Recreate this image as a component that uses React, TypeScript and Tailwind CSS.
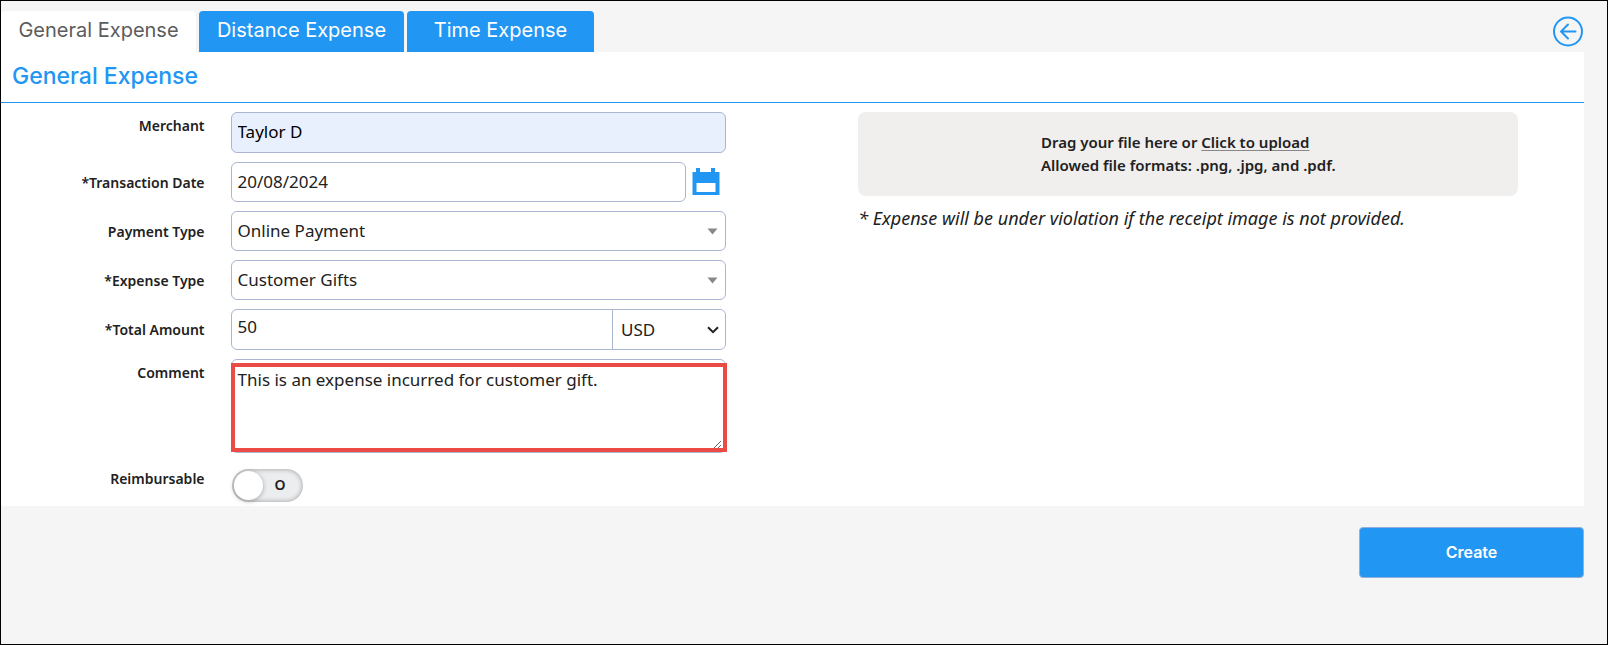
import { useState, type ReactNode } from "react";

const fieldClass =
  "block h-10 w-full rounded-md border border-[#a9b5d1] bg-white px-1.5 text-[17px] leading-6 text-[#212121] outline-none";

const labelPadding = {
  none: "pt-0",
  top: "pt-1",
  middle: "pt-[11px]",
};

function Row({
  id,
  label,
  children,
  align = "middle",
}: {
  id: string;
  label: string;
  children: ReactNode;
  align?: keyof typeof labelPadding;
}) {
  return (
    <div className="grid grid-cols-[29%_62.6%] items-start">
      <label
        htmlFor={id}
        className={labelPadding[align] + " pr-[26px] text-right text-sm leading-5 font-semibold text-[#212121]"}
      >
        {label}
      </label>
      <div className="min-w-0">{children}</div>
    </div>
  );
}

function Dropdown({ id, options }: { id: string; options: string[] }) {
  return (
    <div className="relative">
      <select id={id} className={fieldClass + " appearance-none"}>
        {options.map((o) => (
          <option key={o}>{o}</option>
        ))}
      </select>
      <svg className="pointer-events-none absolute top-[17px] right-2 h-[7px] w-[11px]" viewBox="0 0 11 7" aria-hidden="true">
        <path d="M0.5 0.5h10L5.5 6.5z" fill="#888" />
      </svg>
    </div>
  );
}

export default function App() {
  const [tab, setTab] = useState(0);
  const [merchant, setMerchant] = useState("Taylor D");
  const [date, setDate] = useState("20/08/2024");
  const [amount, setAmount] = useState("50");
  const [comment, setComment] = useState("This is an expense incurred for customer gift.");
  const [reimbursable, setReimbursable] = useState(false);

  return (
    <div className="min-h-screen border border-black bg-[#f5f5f5] pr-[23px] pb-8 font-['Noto_Sans',sans-serif] text-[#212121]">
      <header className="flex items-start justify-between pt-2.5">
        <nav className="flex gap-[3px] font-['Inter',sans-serif] text-xl">
          {["General Expense", "Distance Expense", "Time Expense"].map((name, i) => (
            <button
              key={name}
              type="button"
              onClick={() => setTab(i)}
              className={
                (i === tab ? "bg-white text-[#5c5c5c] " : "bg-[#2196f3] text-white ") +
                (i === 0 ? "w-[195px] " : i === 1 ? "w-[205px] " : "w-[187px] ") +
                "h-[41px] rounded-t pb-1 font-normal whitespace-nowrap"
              }
            >
              {name}
            </button>
          ))}
        </nav>
        <button type="button" aria-label="Back" className="mt-[5px]">
          <svg className="size-8" viewBox="0 0 32 32" fill="none" stroke="#2196f3" strokeWidth="2" strokeLinecap="round" strokeLinejoin="round">
            <circle cx="16" cy="15.5" r="14" />
            <path d="M23.5 15.5H9M16 8.5l-7 7 7 7" />
          </svg>
        </button>
      </header>

      <main className="bg-white pb-1">
        <h1 className="h-[51px] border-b border-[#2196f3] pt-2 pl-[11px] font-['Inter',sans-serif] text-[23px] leading-8 font-medium text-[#2196f3]">
          General Expense
        </h1>
        <form className="grid grid-cols-2 pt-[9px]">
          <div className="flex flex-col gap-[9px]">
            <Row id="merchant" label="Merchant" align="top">
              <input
                id="merchant"
                value={merchant}
                onChange={(e) => setMerchant(e.target.value)}
                className="block h-[41px] w-full rounded-md border border-[#a9b5d1] bg-[#e8effd] px-1.5 pb-0.5 text-[17px] text-black outline-none"
              />
            </Row>
            <Row id="date" label="*Transaction Date">
              <div className="flex items-center gap-1.5">
                <input id="date" value={date} onChange={(e) => setDate(e.target.value)} className={fieldClass + " pb-0.5"} />
                <button type="button" aria-label="Open calendar" className="mr-1.5 shrink-0">
                  <svg className="h-7 w-7" viewBox="0 0 28 28" fill="#2196f3">
                    <path d="M4 0h4v4h11V0h4v4h4.500v23H.5V4H4zM4.500 15v9h19v-9z" fillRule="evenodd" />
                  </svg>
                </button>
              </div>
            </Row>
            <Row id="payment" label="Payment Type">
              <Dropdown id="payment" options={["Online Payment", "Cash"]} />
            </Row>
            <Row id="expense" label="*Expense Type">
              <Dropdown id="expense" options={["Customer Gifts", "Meals"]} />
            </Row>
            <Row id="amount" label="*Total Amount">
              <div className="flex h-[41px] rounded-md border border-[#a9b5d1] bg-white text-[17px]">
                <input
                  id="amount"
                  value={amount}
                  onChange={(e) => setAmount(e.target.value)}
                  className="min-w-0 flex-1 rounded-l-md px-1.5 pb-1.5 outline-none"
                />
                <div className="relative w-[113px] border-l border-[#a9b5d1]">
                  <select aria-label="Currency" className="h-full w-full appearance-none rounded-r-md bg-white pl-2 outline-none">
                    <option>USD</option>
                    <option>EUR</option>
                  </select>
                  <svg className="pointer-events-none absolute top-4 right-1.5 h-2 w-3" viewBox="0 0 12 8" fill="none" stroke="#212121" strokeWidth="2">
                    <path d="M1 1.200l5 5 5-5" />
                  </svg>
                </div>
              </div>
            </Row>
            <Row id="comment" label="Comment" align="top">
              <div className="relative rounded-md border border-[#a9b5d1] pr-[3px] pb-[3px]">
                <textarea
                  id="comment"
                  value={comment}
                  onChange={(e) => setComment(e.target.value)}
                  className="block h-[89px] w-full px-1.5 pt-2 text-[17px] leading-6 outline-none"
                />
                <div className="pointer-events-none absolute top-[3px] -right-0.5 bottom-0 -left-px border-4 border-[#ea4b45]" />
              </div>
            </Row>
            <div className="pt-[7px]">
              <Row id="reimbursable" label="Reimbursable" align="none">
                <label className="relative ml-px flex h-[33px] w-[71px] cursor-pointer items-center rounded-full bg-[#ebedef] shadow-[inset_0_0_4px_1px_rgba(0,0,0,0.25)]">
                  <input
                    id="reimbursable"
                    type="checkbox"
                    checked={reimbursable}
                    onChange={(e) => setReimbursable(e.target.checked)}
                    className="peer absolute inset-0 m-0 cursor-pointer opacity-0"
                  />
                  <span className="ml-0.5 size-[29px] rounded-full bg-white shadow-[0_1px_5px_rgba(0,0,0,0.3)] peer-checked:order-2 peer-checked:ml-3" />
                  <span className="ml-3 pb-0.5 text-sm font-semibold">O</span>
                </label>
              </Row>
            </div>
          </div>

          <div className="px-[8.3%]">
            <div className="flex h-[84px] items-center justify-center rounded-lg bg-[#f0efed]">
              <p className="text-[15px] leading-[23px] font-semibold">
                Drag your file here or{" "}
                <a href="#upload" className="underline decoration-[#888] decoration-1 underline-offset-2">
                  Click to upload
                </a>
                <br />
                Allowed file formats: .png, .jpg, and .pdf.
              </p>
            </div>
            <p className="pt-2.5 text-lg leading-6 whitespace-nowrap italic">
              * Expense will be under violation if the receipt image is not provided.
            </p>
          </div>
        </form>
      </main>

      <footer className="flex justify-end pt-[21px]">
        <button
          type="button"
          className="h-[51px] w-[225px] rounded border border-[#8fb0dc] bg-[#2196f3] pb-0.5 font-['Inter',sans-serif] text-base font-semibold text-white"
        >
          Create
        </button>
      </footer>
    </div>
  );
}
